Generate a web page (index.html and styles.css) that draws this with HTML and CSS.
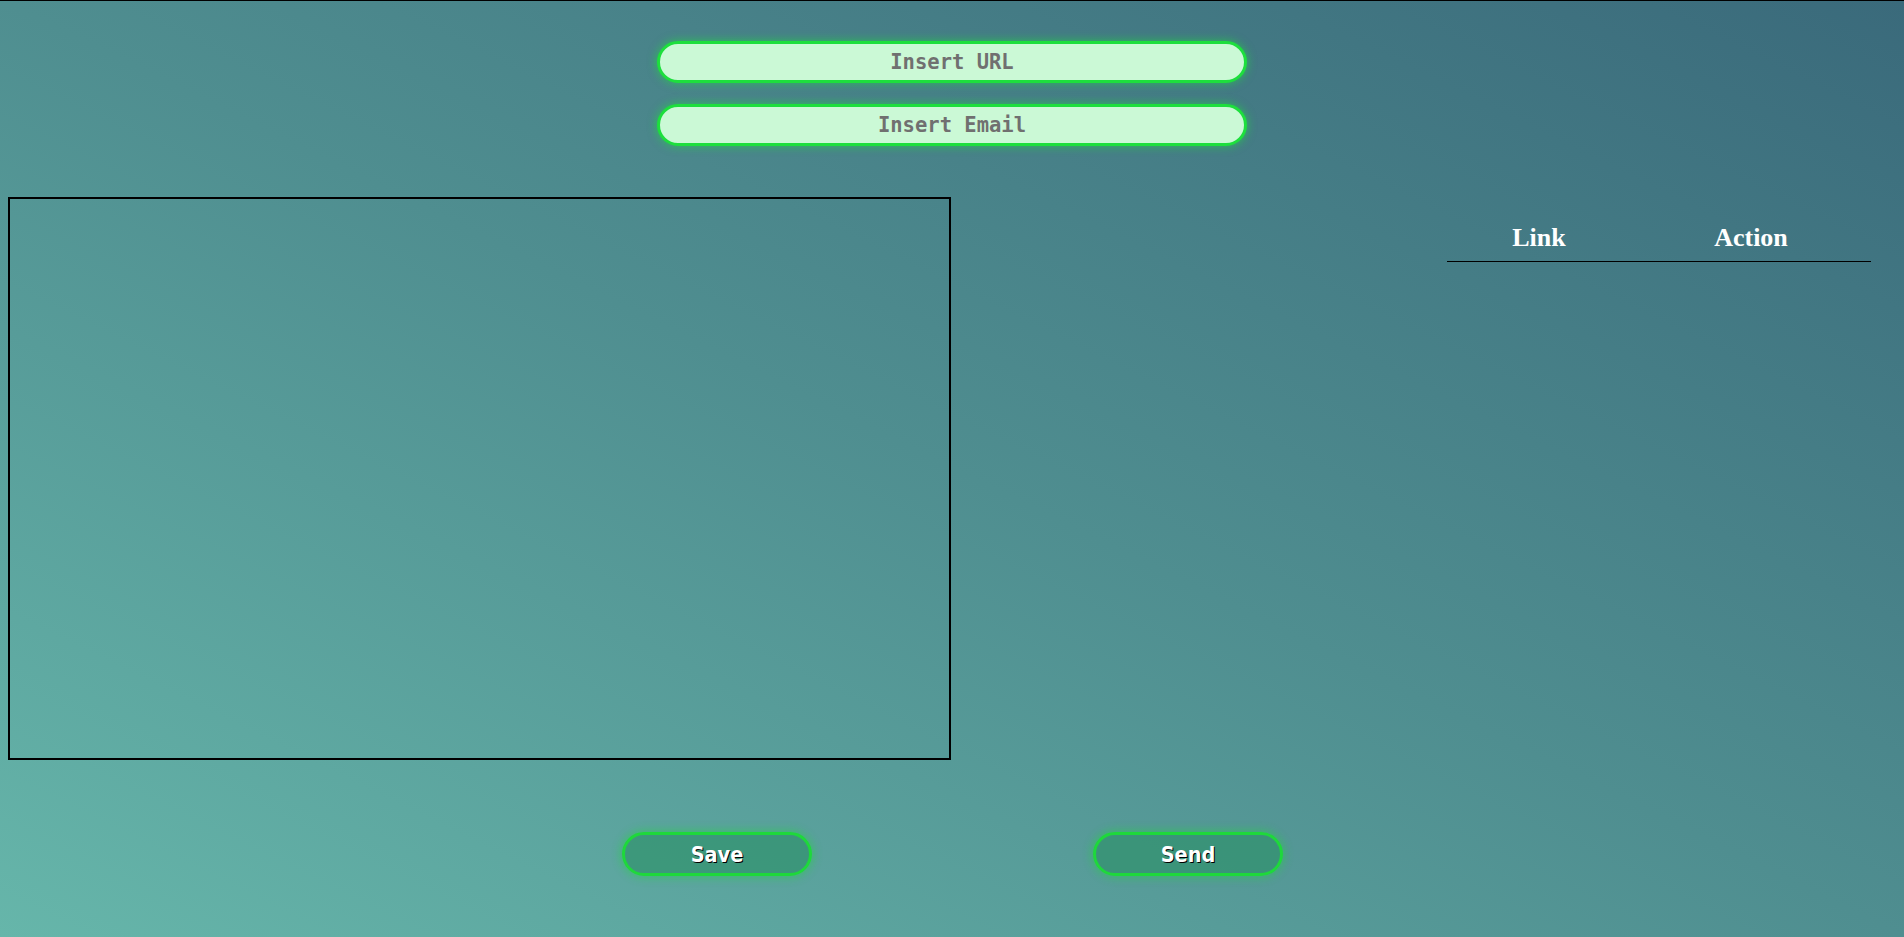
FILE: index.html
```html
<!DOCTYPE html>
<html lang="en">
<head>
<meta charset="utf-8">
<title>Mailer</title>
<link rel="stylesheet" href="styles.css">
</head>
<body>
  <div class="inputs">
    <input class="field" type="text" placeholder="Insert URL">
    <input class="field" type="text" placeholder="Insert Email">
  </div>
  <div class="main">
    <div class="canvas-box"></div>
    <table class="links">
      <thead>
        <tr><th class="col-link">Link</th><th class="col-action">Action</th></tr>
      </thead>
      <tbody></tbody>
    </table>
  </div>
  <div class="buttons">
    <button class="btn btn-save">Save</button>
    <button class="btn btn-send">Send</button>
  </div>
</body>
</html>
```
FILE: styles.css
```css
html {
  min-height: 100%;
  border-top: 1px solid #000;
  background: linear-gradient(to top right, #66b6aa 0%, #4f8e90 50%, #3a6a7b 100%);
  background-attachment: fixed;
}
body {
  margin: 0 8px;
  min-height: 936px;
  font-family: "Liberation Serif", serif;
}
.inputs {
  display: flex;
  flex-direction: column;
  align-items: flex-start;
  gap: 21px;
  padding-top: 40px;
  padding-left: 649px;
}
.field {
  box-sizing: border-box;
  width: 590px;
  height: 42px;
  border: 3px solid #1ddf3d;
  border-radius: 21px;
  background: #cbf9d6;
  box-shadow: 0 0 8px 1px rgba(29, 223, 61, 0.55);
  text-align: center;
  font-family: "DejaVu Sans Mono", monospace;
  font-size: 20.5px;
  font-weight: bold;
  color: #707070;
  outline: none;
  padding: 0;
}
.field::placeholder {
  color: #707070;
  opacity: 1;
}
.main {
  display: flex;
  justify-content: space-between;
  align-items: flex-start;
  margin-top: 51px;
}
.canvas-box {
  box-sizing: border-box;
  width: 943px;
  height: 563px;
  border: 2px solid #000;
}
.links {
  border-collapse: collapse;
  margin-top: 18px;
  margin-right: 25px;
  width: 424px;
}
.links th {
  color: #fff;
  font-family: "Liberation Serif", serif;
  font-weight: bold;
  font-size: 26px;
  line-height: 30px;
  padding: 8px 0;
  border-bottom: 1px solid #000;
  text-align: center;
}
.col-link { width: 184px; }
.col-action { width: 240px; }
.buttons {
  display: flex;
  gap: 281px;
  margin-top: 72px;
  padding-left: 614px;
}
.btn {
  box-sizing: border-box;
  width: 190px;
  height: 44px;
  border: 3px solid #1ed83b;
  border-radius: 22px;
  background: rgba(45, 145, 105, 0.65);
  box-shadow: 0 0 9px 2px rgba(30, 216, 59, 0.45);
  color: #fff;
  font-family: "DejaVu Sans Condensed", "DejaVu Sans", sans-serif;
  font-weight: bold;
  font-size: 21.5px;
  text-shadow: 1px 1px 0 #000;
  padding: 0;
  cursor: pointer;
}
```
